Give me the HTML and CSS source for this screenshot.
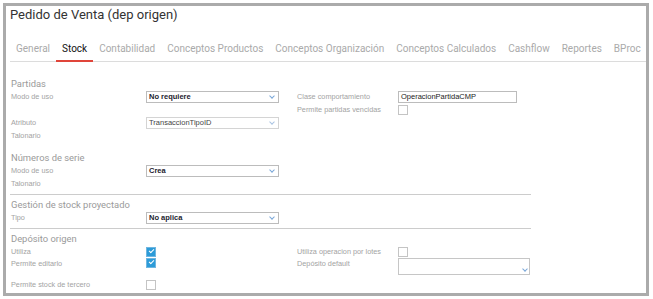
FILE: index.html
```html
<!DOCTYPE html>
<html lang="es">
<head>
    <meta charset="UTF-8">
    <title>Pedido de Venta (dep origen)</title>
    <link rel="stylesheet" href="styles.css">
</head>
<body>
    <div class="marco">
        <h1 class="titulo">Pedido de Venta (dep origen)</h1>

        <ul class="tabs">
            <li>General</li>
            <li class="activo">Stock</li>
            <li>Contabilidad</li>
            <li>Conceptos Productos</li>
            <li>Conceptos Organización</li>
            <li>Conceptos Calculados</li>
            <li>Cashflow</li>
            <li>Reportes</li>
            <li>BProc</li>
        </ul>

        <div class="seccion primera">
            <h2>Partidas</h2>
            <div class="fila">
                <label>Modo de uso</label>
                <div class="combo fuerte">No requiere<span class="flecha"></span></div>
                <span></span>
                <label>Clase comportamiento</label>
                <div class="texto">OperacionPartidaCMP</div>
            </div>
            <div class="fila">
                <label></label>
                <div></div>
                <span></span>
                <label>Permite partidas vencidas</label>
                <div><span class="check"></span></div>
            </div>
            <div class="fila">
                <label>Atributo</label>
                <div class="combo inactivo">TransaccionTipoID<span class="flecha"></span></div>
            </div>
            <div class="fila">
                <label>Talonario</label>
            </div>
        </div>

        <div class="seccion separada">
            <h2>Números de serie</h2>
            <div class="fila">
                <label>Modo de uso</label>
                <div class="combo fuerte">Crea<span class="flecha"></span></div>
            </div>
            <div class="fila">
                <label>Talonario</label>
            </div>
        </div>

        <div class="seccion con-linea">
            <h2>Gestión de stock proyectado</h2>
            <div class="fila">
                <label>Tipo</label>
                <div class="combo fuerte">No aplica<span class="flecha"></span></div>
            </div>
        </div>

        <div class="seccion con-linea">
            <h2>Depósito origen</h2>
            <div class="fila">
                <label>Utiliza</label>
                <div><span class="check marcado"></span></div>
                <span></span>
                <label>Utiliza operacion por lotes</label>
                <div><span class="check"></span></div>
            </div>
            <div class="fila alta">
                <label>Permite editarlo</label>
                <div><span class="check marcado"></span></div>
                <span></span>
                <label>Depósito default</label>
                <div class="combo grande"><span class="flecha"></span></div>
            </div>
            <div class="fila">
                <label>Permite stock de tercero</label>
                <div><span class="check"></span></div>
            </div>
        </div>
    </div>
</body>
</html>
```

FILE: styles.css
```css
* {
    margin: 0;
    padding: 0;
    box-sizing: border-box;
}

body {
    font-family: "Liberation Sans", Arial, sans-serif;
    background: #fff;
    color: #333;
}

.marco {
    margin: 3px 0 0 3px;
    width: 646px;
    height: 293px;
    border: 3px solid #ababab;
    overflow: hidden;
}

.titulo {
    font-family: Roboto, sans-serif;
    font-weight: normal;
    font-size: 13px;
    color: #333;
    padding: 1px 0 0 4px;
    height: 30px;
}

.tabs {
    list-style: none;
    display: flex;
    margin-left: 4px;
    border-bottom: 1px solid #dcdcdc;
    height: 26px;
}

.tabs li {
    font-family: Roboto, sans-serif;
    font-size: 10px;
    color: #aaa;
    padding: 7px 6px 0;
    white-space: nowrap;
}

.tabs li.activo {
    color: #111;
    border-bottom: 2px solid #e0453a;
    margin-bottom: -1px;
}

.seccion {
    margin-left: 4px;
    width: 521px;
    padding-left: 1px;
}

.seccion.primera {
    padding-top: 15px;
}

.seccion.separada {
    margin-top: 9px;
}

.seccion.con-linea {
    border-top: 1px solid #ccc;
    margin-top: 4px;
}

.seccion h2 {
    font-family: Roboto, sans-serif;
    font-weight: normal;
    font-size: 9.4px;
    color: #9a9a9a;
    height: 13px;
    line-height: 13px;
}

.con-linea h2 {
    margin-top: 3px;
}

.fila {
    display: grid;
    grid-template-columns: 135px 133px 18px 101px 133px;
    height: 13px;
    align-items: center;
}

.fila.alta {
    height: 20px;
    align-items: start;
}

.fila.alta label {
    line-height: 12px;
}

.fila label {
    font-size: 7.3px;
    color: #a3a3a3;
    white-space: nowrap;
}

.combo {
    position: relative;
    height: 12px;
    border: 1px solid #bcbcbc;
    font-size: 7.5px;
    line-height: 10px;
    padding-left: 2px;
    color: #222;
}

.combo.fuerte {
    font-weight: bold;
    color: #1c1c2e;
}

.combo.inactivo {
    border-color: #d4d4d4;
    color: #444;
}

.combo.grande {
    height: 17px;
    width: 132px;
    border-color: #c6c6c6;
}

.flecha {
    position: absolute;
    right: 4px;
    top: 2px;
    width: 4px;
    height: 4px;
    border-right: 1px solid #7aa7d8;
    border-bottom: 1px solid #7aa7d8;
    transform: rotate(45deg);
}

.combo.inactivo .flecha {
    border-color: #aac4e2;
}

.combo.grande .flecha {
    top: auto;
    bottom: 3px;
    right: 2px;
}

.texto {
    height: 12px;
    width: 119px;
    border: 1px solid #bcbcbc;
    font-size: 7.5px;
    line-height: 10px;
    padding-left: 2px;
    color: #222;
}

.check {
    display: block;
    width: 10px;
    height: 10px;
    border: 1px solid #c4c4c4;
    background: #fff;
    position: relative;
}

.check.marcado {
    background: #2c9bd8;
    border-color: #6fb6e0;
}

.check.marcado::after {
    content: "";
    position: absolute;
    left: 2px;
    top: 1px;
    width: 4px;
    height: 2px;
    border-left: 1.5px solid #fff;
    border-bottom: 1.5px solid #fff;
    transform: rotate(-45deg);
}
```
